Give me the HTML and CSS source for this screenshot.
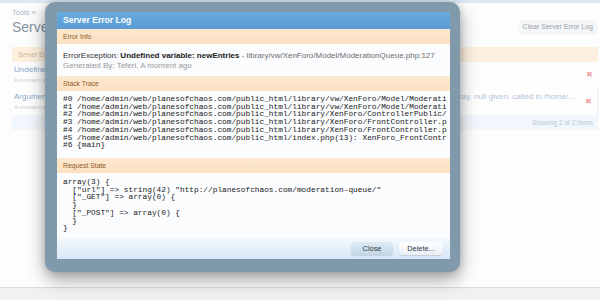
FILE: index.html
```html
<!DOCTYPE html>
<html>
<head>
<meta charset="utf-8">
<link rel="stylesheet" href="styles.css">
</head>
<body>
<div class="page">
  <div class="topstrip"></div>
  <div class="head">
    <div class="crumbs">Tools »</div>
    <div class="titlerow">
      <h1 class="title">Server Error Logs</h1>
      <span class="clear-btn">Clear Server Error Log</span>
    </div>
  </div>
  <div class="list">
    <div class="listhead">Server Errors</div>
    <div class="row">
      <div class="row-main">
        <div class="row-title"><span class="row-left">Undefined variable: newEntries - library/vw/XenForo/Model/ModerationQueue.php:127</span></div>
        <div class="row-sub">A moment ago</div>
      </div>
      <span class="del">✖</span>
    </div>
    <div class="row row-alt">
      <div class="row-main">
        <div class="row-title"><span class="row-left">Argument 1 passed to XenForo_Model_Moderation::get() must be an a</span><span class="row-right">rray, null given, called in /home/...</span></div>
        <div class="row-sub">A moment ago</div>
      </div>
      <span class="del">✖</span>
    </div>
    <div class="listfoot">Showing 2 of 2 Items</div>
  </div>
  <div class="spacer"></div>
  <div class="pagefoot"></div>
</div>

<div class="modal">
  <div class="panel">
    <div class="panel-title">Server Error Log</div>
    <div class="sect">Error Info</div>
    <div class="info">
      <div class="info-line">ErrorException: <b>Undefined variable: newEntries</b> <span class="path">- library/vw/XenForo/Model/ModerationQueue.php:127</span></div>
      <div class="info-by">Generated By: Teferi, A moment ago</div>
    </div>
    <div class="sect">Stack Trace</div>
<pre class="code trace">#0 /home/admin/web/planesofchaos.com/public_html/library/vw/XenForo/Model/Moderati
#1 /home/admin/web/planesofchaos.com/public_html/library/vw/XenForo/Model/Moderati
#2 /home/admin/web/planesofchaos.com/public_html/library/XenForo/ControllerPublic/
#3 /home/admin/web/planesofchaos.com/public_html/library/XenForo/FrontController.p
#4 /home/admin/web/planesofchaos.com/public_html/library/XenForo/FrontController.p
#5 /home/admin/web/planesofchaos.com/public_html/index.php(13): XenForo_FrontContr
#6 {main}</pre>
    <div class="sect">Request State</div>
<pre class="code state">array(3) {
  ["url"] => string(42) "http://planesofchaos.com/moderation-queue/"
  ["_GET"] => array(0) {
  }
  ["_POST"] => array(0) {
  }
}</pre>
    <div class="panel-foot">
      <span class="btn btn-close">Close</span>
      <span class="btn btn-del">Delete...</span>
    </div>
  </div>
</div>
</body>
</html>
```
FILE: styles.css
```css
html, body {
  margin: 0;
  padding: 0;
}
body {
  width: 600px;
  height: 300px;
  overflow: hidden;
  background: #fdfdfe;
  font-family: "Liberation Sans", Arial, sans-serif;
  position: relative;
}
.page {
  height: 300px;
  display: flex;
  flex-direction: column;
}
.topstrip {
  height: 3px;
  background: #dce9f5;
}
.head {
  padding: 5px 3px 0 12px;
}
.crumbs {
  font-size: 7.5px;
  line-height: 9px;
  color: #a9b8c7;
}
.titlerow {
  display: flex;
  justify-content: space-between;
  align-items: flex-start;
  margin-top: 2px;
}
.title {
  margin: 0;
  font-size: 14px;
  line-height: 16px;
  font-weight: normal;
  color: #8894a0;
}
.clear-btn {
  margin-top: 1px;
  height: 13px;
  line-height: 13px;
  padding: 0 4px;
  font-size: 7px;
  color: #9aa3ab;
  background: #f4f6f8;
  border-radius: 3px;
  box-shadow: 0 1px 1px rgba(0,0,0,0.06);
}
.list {
  margin: 12px 2px 0 12px;
}
.listhead {
  height: 15px;
  line-height: 15px;
  padding-left: 6px;
  font-size: 6.5px;
  color: #cdb394;
  background: #fdf0df;
}
.row {
  display: flex;
  align-items: center;
  padding: 3px 5px 3px 2px;
  height: 20px;
}
.row-alt {
  padding-top: 4px;
  height: 20px;
  background: #fefefe;
  border-right: 1px solid #eef0f2;
}
.row-main {
  flex: 1;
  min-width: 0;
}
.row-title {
  display: flex;
  font-size: 8px;
  line-height: 10px;
  color: #86a9cc;
  white-space: nowrap;
}
.row-left {
  flex: 1;
  min-width: 0;
  overflow: hidden;
}
.row-right {
  color: #b1c4d6;
  padding-right: 10px;
}
.row-sub {
  font-size: 6px;
  line-height: 9px;
  margin-top: 1px;
  color: #c9cdd1;
}
.del {
  font-size: 8px;
  color: #f4a3a3;
  line-height: 8px;
}
.listfoot {
  height: 15px;
  line-height: 15px;
  text-align: right;
  padding-right: 5px;
  font-size: 6.5px;
  color: #b3c9dd;
  background: #f1f7fc;
}
.spacer {
  flex: 1;
}
.pagefoot {
  height: 12px;
  border-top: 1px solid #dcdcdc;
  background: #f1f1f1;
}

/* Modal */
.modal {
  position: absolute;
  left: 45px;
  top: 2px;
  width: 415px;
  height: 270px;
  box-sizing: border-box;
  padding: 10px 10px 13px 12px;
  background: #8099ab;
  border-radius: 10px;
  box-shadow: 0 7px 18px rgba(0,0,0,0.38), 0 0 6px rgba(0,0,0,0.15);
}
.panel {
  height: 100%;
  display: flex;
  flex-direction: column;
  background: #fbfcfe;
  overflow: hidden;
}
.panel-title {
  height: 17px;
  line-height: 17px;
  padding-left: 6px;
  font-size: 8.6px;
  font-weight: bold;
  color: #fff;
  background: linear-gradient(#68abdf, #5b9dd3);
  flex-shrink: 0;
}
.sect {
  height: 15px;
  line-height: 15px;
  padding-left: 6px;
  font-size: 6.8px;
  color: #8f5a25;
  background: linear-gradient(#fde8cf, #fbe1c2);
  flex-shrink: 0;
}
.info {
  padding: 7px 6px 4px 6px;
  height: 21px;
  flex-shrink: 0;
}
.info-line {
  font-size: 8px;
  line-height: 10px;
  color: #333;
  white-space: nowrap;
}
.info-line b {
  font-weight: bold;
  color: #222;
}
.path {
  color: #6e6e6e;
}
.info-by {
  font-size: 8px;
  line-height: 9px;
  color: #9a9a9a;
}
.code {
  margin: 0;
  padding: 0 6px;
  font-family: "Liberation Mono", "Courier New", monospace;
  font-size: 7.8px;
  line-height: 7.7px;
  color: #222;
  white-space: pre;
  overflow: hidden;
  flex-shrink: 0;
}
.trace {
  padding-top: 5px;
  height: 62px;
}
.state {
  padding-top: 6px;
  flex: 1;
}
.panel-foot {
  height: 21px;
  flex-shrink: 0;
  display: flex;
  justify-content: flex-end;
  align-items: center;
  gap: 6px;
  padding-right: 7px;
  background: linear-gradient(#f4f9fd, #d6e8f7);
}
.btn {
  height: 13px;
  line-height: 13px;
  font-size: 7.4px;
  color: #2d3a46;
  text-align: center;
  border-radius: 4px;
}
.btn-close {
  width: 42px;
  background: linear-gradient(#dfeaf3, #c3d6e6);
  box-shadow: 0 1px 1px rgba(0,0,0,0.12);
}
.btn-del {
  width: 44px;
  background: linear-gradient(#ffffff, #eaeff4);
  box-shadow: 0 1px 1px rgba(0,0,0,0.12);
}
```
